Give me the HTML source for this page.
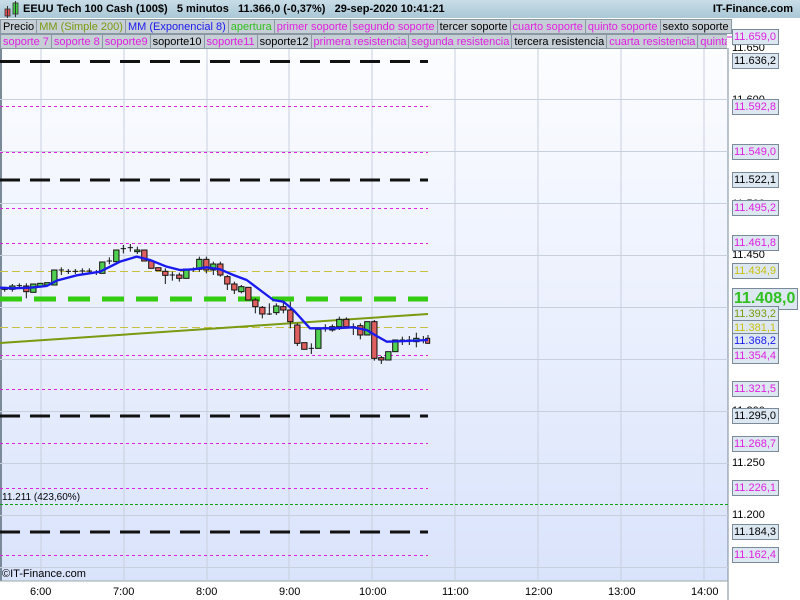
<!DOCTYPE html>
<html><head><style>
body{margin:0;width:800px;height:600px;overflow:hidden;background:#fff;font-family:"Liberation Sans",sans-serif;position:relative}
#hdr{position:absolute;left:0;top:0;width:800px;height:18px;background:linear-gradient(#c9dde8,#a9c7d6);font-weight:bold;font-size:11px;line-height:18px}
.row{position:absolute;left:0;height:15px;white-space:nowrap;font-size:11px;line-height:14px}
.row span{display:inline-block;background:#c7cfd6;border:1px solid #8a98a4;padding:0 2px;margin-right:-1px;height:13px;vertical-align:top}
.m{color:#e020e0}.k{color:#000}
.lab{position:absolute;left:732px;width:45px;height:14px;background:#dde7f2;border:1px solid #7a8a99;font-size:11px;line-height:14px;padding-left:1px;box-sizing:border-box;width:47px;height:16px}
.ax{position:absolute;left:732px;font-size:11px;line-height:12px}
.t{position:absolute;top:586px;font-size:11px}
</style></head><body>
<svg width="800" height="600" style="position:absolute;left:0;top:0">
<defs><linearGradient id="bg" x1="0" y1="0" x2="0" y2="1"><stop offset="0" stop-color="#fcfdff"/><stop offset="1" stop-color="#d9e3fb"/></linearGradient></defs>
<rect x="0" y="48" width="728" height="533" fill="url(#bg)"/>
<line x1="1" y1="48" x2="1" y2="581" stroke="#7a8a99" stroke-width="2"/>
<line x1="728" y1="48" x2="728" y2="600" stroke="#7a8a99" stroke-width="1"/>
<line x1="0" y1="581" x2="728" y2="581" stroke="#9aa" stroke-width="1"/>
<g stroke="#c8cfdd" stroke-width="1">
<line x1="41" y1="48" x2="41" y2="581"/><line x1="124" y1="48" x2="124" y2="581"/><line x1="207" y1="48" x2="207" y2="581"/><line x1="289" y1="48" x2="289" y2="581"/><line x1="372" y1="48" x2="372" y2="581"/><line x1="455" y1="48" x2="455" y2="581"/><line x1="538" y1="48" x2="538" y2="581"/><line x1="621" y1="48" x2="621" y2="581"/><line x1="704" y1="48" x2="704" y2="581"/>
<line x1="0" y1="99.5" x2="728" y2="99.5"/><line x1="0" y1="151.5" x2="728" y2="151.5"/><line x1="0" y1="203.5" x2="728" y2="203.5"/><line x1="0" y1="255.5" x2="728" y2="255.5"/><line x1="0" y1="307.5" x2="728" y2="307.5"/><line x1="0" y1="359.5" x2="728" y2="359.5"/><line x1="0" y1="411.5" x2="728" y2="411.5"/><line x1="0" y1="463.5" x2="728" y2="463.5"/><line x1="0" y1="515.5" x2="728" y2="515.5"/><line x1="0" y1="567.5" x2="728" y2="567.5"/>
</g>
<g stroke="#111" stroke-width="3" stroke-dasharray="20 10">
<line x1="0" y1="61.5" x2="428" y2="61.5"/><line x1="0" y1="180" x2="428" y2="180"/><line x1="0" y1="416" x2="428" y2="416"/><line x1="0" y1="532" x2="428" y2="532"/>
</g>
<g stroke="#e020e0" stroke-width="1" stroke-dasharray="3 3">
<line x1="0" y1="106.5" x2="428" y2="106.5"/><line x1="0" y1="152.5" x2="428" y2="152.5"/><line x1="0" y1="208.5" x2="428" y2="208.5"/><line x1="0" y1="243.5" x2="428" y2="243.5"/><line x1="0" y1="355.5" x2="428" y2="355.5"/><line x1="0" y1="389.5" x2="428" y2="389.5"/><line x1="0" y1="443.5" x2="428" y2="443.5"/><line x1="0" y1="488.5" x2="428" y2="488.5"/><line x1="0" y1="555.5" x2="428" y2="555.5"/>
</g>
<g stroke="#c8c040" stroke-width="1" stroke-dasharray="8 4"><line x1="0" y1="271.5" x2="428" y2="271.5"/><line x1="0" y1="327.5" x2="428" y2="327.5"/></g>
<line x1="0" y1="504.5" x2="728" y2="504.5" stroke="#10a010" stroke-dasharray="3 2"/>
<line x1="0" y1="299" x2="428" y2="299" stroke="#33cc11" stroke-width="5" stroke-dasharray="22 12"/>
<line x1="0" y1="343" x2="428" y2="314" stroke="#7a9a10" stroke-width="2"/>
<g transform="translate(0,230) scale(0.33333)">
<g id="c" stroke="#111" stroke-width="3">
<!-- candles x,top,bottom -->
<line x1="79" y1="160" x2="79" y2="205"/><rect x="71" y="168" width="16" height="17" fill="#e06060"/>
<rect x="92" y="162" width="16" height="25" fill="#50d050"/><rect x="113" y="160" width="16" height="10" fill="#50d050"/><rect x="134" y="158" width="16" height="7" fill="#50d050"/>
<line x1="14" y1="170" x2="14" y2="185"/><rect x="6" y="174" width="16" height="4" fill="#50d050"/>
<line x1="37" y1="162" x2="37" y2="185"/><rect x="29" y="168" width="16" height="10" fill="#50d050"/>
<line x1="58" y1="160" x2="58" y2="175"/><line x1="50" y1="167" x2="66" y2="167"/>
<rect x="155" y="120" width="16" height="45" fill="#50d050"/>
<line x1="184" y1="112" x2="184" y2="135"/><line x1="176" y1="120" x2="192" y2="120"/>
<line x1="205" y1="117" x2="205" y2="132"/><line x1="197" y1="124" x2="213" y2="124"/>
<line x1="226" y1="117" x2="226" y2="132"/><line x1="218" y1="124" x2="234" y2="124"/>
<line x1="247" y1="115" x2="247" y2="132"/><line x1="239" y1="123" x2="255" y2="123"/>
<line x1="268" y1="115" x2="268" y2="132"/><line x1="260" y1="123" x2="276" y2="123"/>
<line x1="289" y1="120" x2="289" y2="135"/><line x1="281" y1="127" x2="297" y2="127"/>
<rect x="299" y="96" width="16" height="34" fill="#50d050"/>
<line x1="328" y1="82" x2="328" y2="103"/><line x1="320" y1="93" x2="336" y2="93"/>
<rect x="341" y="60" width="16" height="35" fill="#50d050"/>
<line x1="370" y1="45" x2="370" y2="70"/><line x1="362" y1="56" x2="378" y2="56"/>
<line x1="391" y1="42" x2="391" y2="65"/><line x1="383" y1="53" x2="399" y2="53"/>
<line x1="412" y1="50" x2="412" y2="72"/><rect x="404" y="60" width="16" height="5" fill="#50d050"/>
<rect x="425" y="60" width="16" height="33" fill="#e06060"/>
<rect x="446" y="93" width="16" height="22" fill="#e06060"/>
<rect x="467" y="113" width="16" height="9" fill="#e06060"/>
<line x1="496" y1="115" x2="496" y2="162"/><rect x="488" y="124" width="16" height="12" fill="#e06060"/>
<line x1="517" y1="125" x2="517" y2="152"/><line x1="509" y1="135" x2="525" y2="135"/>
<line x1="538" y1="128" x2="538" y2="155"/><rect x="530" y="135" width="16" height="10" fill="#e06060"/>
<rect x="551" y="117" width="16" height="28" fill="#50d050"/>
<line x1="580" y1="112" x2="580" y2="125"/><line x1="572" y1="118" x2="588" y2="118"/>
<line x1="598" y1="80" x2="598" y2="125"/><rect x="590" y="88" width="16" height="30" fill="#50d050"/>
<line x1="619" y1="80" x2="619" y2="130"/><rect x="611" y="88" width="16" height="32" fill="#e06060"/>
<line x1="640" y1="95" x2="640" y2="135"/><rect x="632" y="102" width="16" height="18" fill="#50d050"/>
<line x1="661" y1="95" x2="661" y2="140"/><rect x="653" y="102" width="16" height="33" fill="#e06060"/>
<line x1="682" y1="135" x2="682" y2="180"/><rect x="674" y="140" width="16" height="22" fill="#e06060"/>
<line x1="703" y1="155" x2="703" y2="192"/><rect x="695" y="162" width="16" height="18" fill="#e06060"/>
<line x1="724" y1="165" x2="724" y2="190"/><rect x="716" y="170" width="16" height="15" fill="#50d050"/>
<rect x="737" y="172" width="16" height="38" fill="#e06060"/>
<line x1="766" y1="205" x2="766" y2="250"/><rect x="758" y="210" width="16" height="20" fill="#e06060"/>
<line x1="787" y1="228" x2="787" y2="265"/><rect x="779" y="232" width="16" height="20" fill="#e06060"/>
<line x1="808" y1="220" x2="808" y2="255"/><line x1="800" y1="252" x2="816" y2="252"/>
<line x1="829" y1="220" x2="829" y2="255"/><rect x="821" y="228" width="16" height="20" fill="#50d050"/>
<line x1="850" y1="215" x2="850" y2="250"/><rect x="842" y="230" width="16" height="10" fill="#e06060"/>
<line x1="871" y1="215" x2="871" y2="295"/><rect x="863" y="240" width="16" height="35" fill="#e06060"/>
<line x1="892" y1="280" x2="892" y2="348"/><rect x="884" y="285" width="16" height="55" fill="#e06060"/>
<rect x="905" y="338" width="16" height="20" fill="#e06060"/>
<line x1="934" y1="340" x2="934" y2="372"/><line x1="926" y1="355" x2="942" y2="355"/>
<rect x="947" y="298" width="16" height="57" fill="#50d050"/>
<line x1="976" y1="283" x2="976" y2="305"/><line x1="968" y1="293" x2="984" y2="293"/>
<line x1="997" y1="283" x2="997" y2="305"/><rect x="989" y="290" width="16" height="10" fill="#50d050"/>
<line x1="1018" y1="260" x2="1018" y2="300"/><rect x="1010" y="268" width="16" height="22" fill="#50d050"/>
<line x1="1039" y1="262" x2="1039" y2="295"/><rect x="1031" y="268" width="16" height="22" fill="#e06060"/>
<line x1="1060" y1="280" x2="1060" y2="315"/><line x1="1052" y1="290" x2="1068" y2="290"/>
<line x1="1081" y1="280" x2="1081" y2="328"/><rect x="1073" y="287" width="16" height="28" fill="#e06060"/>
<rect x="1094" y="275" width="16" height="40" fill="#50d050"/>
<line x1="1123" y1="270" x2="1123" y2="392"/><rect x="1115" y="275" width="16" height="110" fill="#e06060"/>
<line x1="1144" y1="378" x2="1144" y2="402"/><rect x="1136" y="383" width="16" height="7" fill="#e06060"/>
<rect x="1157" y="365" width="16" height="25" fill="#50d050"/>
<rect x="1178" y="330" width="16" height="35" fill="#50d050"/>
<line x1="1207" y1="320" x2="1207" y2="345"/><line x1="1199" y1="330" x2="1215" y2="330"/>
<line x1="1228" y1="318" x2="1228" y2="345"/><line x1="1220" y1="330" x2="1236" y2="330"/>
<line x1="1249" y1="308" x2="1249" y2="352"/><rect x="1241" y="325" width="16" height="10" fill="#50d050"/>
<line x1="1270" y1="318" x2="1270" y2="340"/><line x1="1262" y1="330" x2="1278" y2="330"/>
<line x1="1284" y1="315" x2="1284" y2="340"/><rect x="1277" y="325" width="12" height="15" fill="#e06060"/>
</g>
<path d="M0,173 L40,175 L90,173 L140,168 L170,152 L230,136 L300,125 L360,95 L410,80 L450,90 L500,110 L540,120 L580,118 L620,112 L660,118 L700,135 L740,150 L780,180 L820,210 L850,215 L880,240 L930,295 L1000,295 L1060,292 L1100,300 L1130,318 L1160,335 L1220,333 L1284,330" fill="none" stroke="#1a1aee" stroke-width="7" stroke-linejoin="round"/>
</g>
<g stroke="#000"><line x1="724" y1="37" x2="732" y2="37" stroke="#e020e0"/></g>
</svg>
<div id="hdr"><svg width="22" height="18" style="position:absolute;left:2px;top:0"><rect x="3" y="9" width="5" height="7" fill="#e05050" stroke="#333" stroke-width="0.8"/><line x1="5.5" y1="6" x2="5.5" y2="18" stroke="#333"/><rect x="11" y="3" width="5" height="11" fill="#40d040" stroke="#333" stroke-width="0.8"/><line x1="13.5" y1="1" x2="13.5" y2="17" stroke="#333"/></svg><span style="position:absolute;left:23px">EEUU Tech 100 Cash (100$)&nbsp;&nbsp;&nbsp;5 minutos&nbsp;&nbsp;&nbsp;11.366,0 (-0,37%)&nbsp;&nbsp;&nbsp;29-sep-2020 10:41:21</span><span style="position:absolute;right:7px">IT-Finance.com</span></div>
<div class="row" style="top:19px"><span>Precio</span><span style="color:#7a9a10">MM (Simple 200)</span><span style="color:#1a1aee">MM (Exponencial 8)</span><span style="color:#30c020">apertura</span><span class="m">primer soporte</span><span class="m">segundo soporte</span><span>tercer soporte</span><span class="m">cuarto soporte</span><span class="m">quinto soporte</span><span>sexto soporte</span></div>
<div class="row" style="top:34px;width:727px;overflow:hidden"><span class="m">soporte 7</span><span class="m">soporte 8</span><span class="m">soporte9</span><span>soporte10</span><span class="m">soporte11</span><span>soporte12</span><span class="m">primera resistencia</span><span class="m">segunda resistencia</span><span>tercera resistencia</span><span class="m">cuarta resistencia</span><span class="m">quinta resistencia</span></div>
<div class="ax" style="top:42px">11.650</div><div class="ax" style="top:94px">11.600</div><div class="ax" style="top:198px">11.500</div><div class="ax" style="top:249px">11.450</div><div class="ax" style="top:405px">11.300</div><div class="ax" style="top:457px">11.250</div><div class="ax" style="top:509px">11.200</div>
<div class="lab m" style="top:29px">11.659,0</div>
<div class="lab" style="top:53px">11.636,2</div>
<div class="lab m" style="top:99px">11.592,8</div>
<div class="lab m" style="top:144px">11.549,0</div>
<div class="lab" style="top:172px">11.522,1</div>
<div class="lab m" style="top:200px">11.495,2</div>
<div class="lab m" style="top:235px">11.461,8</div>
<div class="lab" style="top:263px;color:#c8c010">11.434,9</div>
<div class="lab" style="top:288px;height:22px;width:66px;font-size:16px;line-height:20px;font-weight:bold;color:#30c020">11.408,0</div>
<div class="lab" style="top:306px;color:#7a9a10">11.393,2</div>
<div class="lab" style="top:320px;color:#c8c010">11.381,1</div>
<div class="lab" style="top:333px;color:#1a1aee">11.368,2</div>
<div class="lab m" style="top:348px">11.354,4</div>
<div class="lab m" style="top:381px">11.321,5</div>
<div class="lab" style="top:408px">11.295,0</div>
<div class="lab m" style="top:436px">11.268,7</div>
<div class="lab m" style="top:480px">11.226,1</div>
<div class="lab" style="top:524px">11.184,3</div>
<div class="lab m" style="top:547px">11.162,4</div>
<div style="position:absolute;left:2px;top:492px;font-size:10px">11.211 (423,60%)</div>
<div style="position:absolute;left:2px;top:568px;font-size:11px">©IT-Finance.com</div>
<div class="t" style="left:30px">6:00</div><div class="t" style="left:113px">7:00</div><div class="t" style="left:196px">8:00</div><div class="t" style="left:279px">9:00</div><div class="t" style="left:359px">10:00</div><div class="t" style="left:442px">11:00</div><div class="t" style="left:525px">12:00</div><div class="t" style="left:608px">13:00</div><div class="t" style="left:691px">14:00</div>
</body></html>
